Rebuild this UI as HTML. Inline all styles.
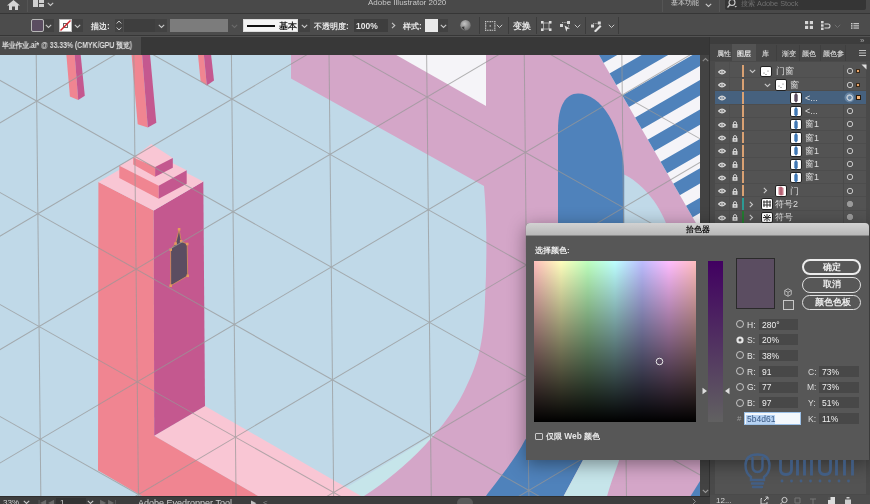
<!DOCTYPE html>
<html><head><meta charset="utf-8">
<style>
*{box-sizing:border-box;margin:0;padding:0}
html,body{width:870px;height:504px;overflow:hidden;background:#535353;font-family:"Liberation Sans",sans-serif;color:#ddd}
.a{position:absolute}
.t{position:absolute;white-space:nowrap;line-height:1;will-change:transform}
</style></head><body>
<!-- top app bar -->
<div class="a" style="left:0;top:0;width:870px;height:14px;background:#494949;border-bottom:1px solid #363636"></div>
<svg class="a" style="left:7px;top:0" width="13" height="10"><path d="M6.5 0L13 5.5H11V10H8V6.5H5V10H2V5.5H0Z" fill="#d4d4d4"/></svg>
<div class="a" style="left:27px;top:0;width:1px;height:12px;background:#555"></div>
<svg class="a" style="left:33px;top:0" width="12" height="8"><path d="M0 0H5V7H0ZM6 0H11V3H6ZM6 4H11V7H6Z" fill="#cfcfcf"/></svg>
<svg class="a" style="left:47px;top:2px" width="7" height="5"><path d="M0.8 0.8L3.5 3.5L6.2 0.8" fill="none" stroke="#c8c8c8" stroke-width="1.1"/></svg>
<div class="t" style="left:368px;top:-1.5px;font-size:8px;color:#c8c8c8">Adobe Illustrator 2020</div>
<div class="a" style="left:662px;top:0;width:1px;height:12px;background:#555"></div>
<div class="t" style="left:671px;top:-0.5px;font-size:6.8px;color:#d0d0d0">基本功能</div>
<svg class="a" style="left:705px;top:3px" width="7" height="5"><path d="M0.8 0.8L3.5 3.5L6.2 0.8" fill="none" stroke="#c8c8c8" stroke-width="1.1"/></svg>
<div class="a" style="left:719px;top:0;width:1px;height:12px;background:#555"></div>
<div class="a" style="left:725px;top:0;width:141px;height:10px;background:#353535;border-radius:0 0 2px 2px"></div>
<svg class="a" style="left:727px;top:0" width="10" height="8"><circle cx="5" cy="2.5" r="3" fill="none" stroke="#c8c8c8" stroke-width="1.1"/><path d="M3 4.5L0.5 7.5" stroke="#c8c8c8" stroke-width="1.2"/><path d="M7.5 6H10L8.7 7.5Z" fill="#c8c8c8"/></svg>
<div class="t" style="left:741px;top:-0.5px;font-size:7.3px;color:#707070">搜索 Adobe Stock</div>
<!-- control bar -->
<div class="a" style="left:0;top:14px;width:870px;height:22px;background:#4c4c4c;border-bottom:1px solid #363636"></div>
<div class="a" style="left:31px;top:19px;width:13px;height:13px;background:#5b4d61;border:1px solid #b8b8b8;border-radius:2px"></div>
<div class="a" style="left:44px;top:19px;width:10px;height:13px;background:#424242"></div><svg class="a" style="left:45px;top:24px" width="7" height="5"><path d="M0.8 0.8L3.5 3.5L6.2 0.8" fill="none" stroke="#c8c8c8" stroke-width="1.1"/></svg>
<div class="a" style="left:59px;top:19px;width:13px;height:13px;background:#fff;border:1px solid #bbb"></div>
<svg class="a" style="left:59px;top:19px" width="13" height="13"><rect x="4.5" y="4.5" width="4" height="4" fill="none" stroke="#666" stroke-width="1"/><path d="M1.5 11.5L11.5 1.5" stroke="#d0222a" stroke-width="1.4"/></svg>
<div class="a" style="left:72px;top:19px;width:11px;height:13px;background:#424242"></div><svg class="a" style="left:74px;top:24px" width="7" height="5"><path d="M0.8 0.8L3.5 3.5L6.2 0.8" fill="none" stroke="#c8c8c8" stroke-width="1.1"/></svg>
<div class="t" style="left:91px;top:21.5px;font-size:8.4px;font-weight:bold;color:#e4e4e4">描边:</div>
<div class="a" style="left:115px;top:19px;width:8px;height:13px;background:#424242"></div>
<svg class="a" style="left:116px;top:20px" width="6" height="11"><path d="M0.7 3.5L3 1L5.3 3.5M0.7 7.5L3 10L5.3 7.5" fill="none" stroke="#c8c8c8" stroke-width="1"/></svg>
<div class="a" style="left:124px;top:19px;width:31px;height:13px;background:#3e3e3e"></div>
<div class="a" style="left:155px;top:19px;width:12px;height:13px;background:#424242"></div><svg class="a" style="left:158px;top:24px" width="7" height="5"><path d="M0.8 0.8L3.5 3.5L6.2 0.8" fill="none" stroke="#c8c8c8" stroke-width="1.1"/></svg>
<div class="a" style="left:170px;top:19px;width:58px;height:13px;background:#7c7c7c"></div>
<svg class="a" style="left:231px;top:24px" width="7" height="5"><path d="M0.8 0.8L3.5 3.5L6.2 0.8" fill="none" stroke="#6a6a6a" stroke-width="1.1"/></svg>
<div class="a" style="left:243px;top:19px;width:55px;height:13px;background:#f4f4f4;border:1px solid #ddd"></div>
<div class="a" style="left:247px;top:25px;width:28px;height:2px;background:#111"></div>
<div class="t" style="left:278.5px;top:21.5px;font-size:8.5px;font-weight:bold;color:#222">基本</div>
<div class="a" style="left:298px;top:19px;width:12px;height:13px;background:#424242"></div><svg class="a" style="left:301px;top:24px" width="7" height="5"><path d="M0.8 0.8L3.5 3.5L6.2 0.8" fill="none" stroke="#c8c8c8" stroke-width="1.1"/></svg>
<div class="t" style="left:314px;top:21.5px;font-size:8.4px;font-weight:bold;color:#e4e4e4">不透明度:</div>
<div class="a" style="left:354px;top:19px;width:34px;height:13px;background:#3e3e3e"></div>
<div class="t" style="left:356px;top:21.5px;font-size:8.5px;font-weight:bold;color:#e8e8e8">100%</div>
<svg class="a" style="left:391px;top:22px" width="5" height="7"><path d="M1 0.8L3.8 3.5L1 6.2" fill="none" stroke="#c8c8c8" stroke-width="1.1"/></svg>
<div class="t" style="left:403px;top:21.5px;font-size:8.4px;font-weight:bold;color:#e4e4e4">样式:</div>
<div class="a" style="left:425px;top:19px;width:13px;height:13px;background:#e9e9e9"></div>
<div class="a" style="left:438px;top:19px;width:10px;height:13px;background:#424242"></div><svg class="a" style="left:440px;top:24px" width="7" height="5"><path d="M0.8 0.8L3.5 3.5L6.2 0.8" fill="none" stroke="#c8c8c8" stroke-width="1.1"/></svg>
<svg class="a" style="left:460px;top:20px" width="11" height="11"><defs><radialGradient id="gl" cx="0.4" cy="0.35" r="0.7"><stop offset="0" stop-color="#c4c4c4"/><stop offset="1" stop-color="#6a6a6a"/></radialGradient></defs><circle cx="5.5" cy="5.3" r="5.2" fill="url(#gl)"/><path d="M1.5 7Q3 9.5 5 10Q3.5 8 4.5 6.5Z" fill="#3a3a3a"/></svg>
<div class="a" style="left:479px;top:17px;width:1px;height:17px;background:#3c3c3c"></div>
<svg class="a" style="left:485px;top:21px" width="11" height="10"><g fill="#cfcfcf"><rect x="0" y="0" width="1.3" height="1.3"/><rect x="0" y="4.3" width="1.3" height="1.3"/><rect x="0" y="8.6" width="1.3" height="1.3"/><rect x="4.6" y="0" width="1.3" height="1.3"/><rect x="4.6" y="4.3" width="1.3" height="1.3"/><rect x="4.6" y="8.6" width="1.3" height="1.3"/><rect x="9.2" y="0" width="1.3" height="1.3"/><rect x="9.2" y="4.3" width="1.3" height="1.3"/><rect x="9.2" y="8.6" width="1.3" height="1.3"/><rect x="2" y="0.2" width="1.6" height="0.9"/><rect x="6.6" y="0.2" width="1.6" height="0.9"/><rect x="2" y="8.8" width="1.6" height="0.9"/><rect x="6.6" y="8.8" width="1.6" height="0.9"/><rect x="0.2" y="2" width="0.9" height="1.6"/><rect x="0.2" y="6.4" width="0.9" height="1.6"/><rect x="9.4" y="2" width="0.9" height="1.6"/><rect x="9.4" y="6.4" width="0.9" height="1.6"/></g></svg>
<svg class="a" style="left:496px;top:24px" width="7" height="5"><path d="M0.8 0.8L3.5 3.5L6.2 0.8" fill="none" stroke="#c8c8c8" stroke-width="1"/></svg>
<div class="a" style="left:508px;top:17px;width:1px;height:17px;background:#3c3c3c"></div>
<div class="t" style="left:513px;top:21.5px;font-size:8.5px;color:#e6e6e6;font-weight:bold">变换</div>
<div class="a" style="left:536px;top:17px;width:1px;height:17px;background:#3c3c3c"></div>
<svg class="a" style="left:541px;top:20.5px" width="10.5" height="10"><path d="M2.5 2H8V8H2.5" fill="none" stroke="#bdbdbd" stroke-width="0.8"/><g fill="#dedede"><rect x="0" y="0" width="2.6" height="2.6"/><rect x="7.9" y="0" width="2.6" height="2.6"/><rect x="0" y="7.4" width="2.6" height="2.6"/><rect x="7.9" y="7.4" width="2.6" height="2.6"/></g><path d="M2.5 2V8" stroke="#bdbdbd" stroke-width="0.8"/></svg>
<svg class="a" style="left:560px;top:20.5px" width="11" height="11"><path d="M2 1.5H8.5V6.5" fill="none" stroke="#bdbdbd" stroke-width="0.8" stroke-dasharray="1.3 1"/><rect x="0" y="3" width="3" height="3" fill="#d8d8d8"/><rect x="7" y="0" width="3" height="3" fill="#d8d8d8"/><path d="M4.5 4.5L10 7.5L7.3 8L6.3 10.8Z" fill="#e2e2e2"/></svg><svg class="a" style="left:574px;top:24px" width="7" height="5"><path d="M0.8 0.8L3.5 3.5L6.2 0.8" fill="none" stroke="#c8c8c8" stroke-width="1"/></svg>
<div class="a" style="left:585px;top:17px;width:1px;height:17px;background:#3c3c3c"></div>
<svg class="a" style="left:590.5px;top:20.5px" width="11" height="11"><path d="M2 2.5H8" fill="none" stroke="#bdbdbd" stroke-width="0.8" stroke-dasharray="1.3 1"/><rect x="0" y="3.5" width="3" height="3" fill="#d8d8d8"/><rect x="6.8" y="0.5" width="3" height="3" fill="#d8d8d8"/><path d="M3.5 9.5L9 4L10.5 5.5L5 11H3.5Z" fill="#e2e2e2"/></svg><svg class="a" style="left:608px;top:24px" width="7" height="5"><path d="M0.8 0.8L3.5 3.5L6.2 0.8" fill="none" stroke="#c8c8c8" stroke-width="1"/></svg>
<div class="a" style="left:618px;top:17px;width:1px;height:17px;background:#3c3c3c"></div>
<svg class="a" style="left:804.5px;top:21px" width="8" height="8"><g fill="#d6d6d6"><rect x="0" y="0" width="3.2" height="3.2"/><rect x="4.8" y="0" width="3.2" height="3.2"/><rect x="0" y="4.8" width="3.2" height="3.2"/><rect x="4.8" y="4.8" width="3.2" height="3.2"/></g></svg>
<svg class="a" style="left:820.5px;top:21px" width="10" height="9"><g fill="#d6d6d6"><rect x="0" y="0" width="2.6" height="2.4"/><rect x="0" y="3.3" width="2.6" height="2.4"/><rect x="0" y="6.6" width="2.6" height="2.4"/></g><path d="M3.5 3H7Q9 3 9 5Q9 7 7 7H3.5" fill="none" stroke="#d6d6d6" stroke-width="1.1"/></svg><svg class="a" style="left:834px;top:24px" width="7" height="5"><path d="M0.8 0.8L3.5 3.5L6.2 0.8" fill="none" stroke="#6f6f6f" stroke-width="1"/></svg>
<svg class="a" style="left:851px;top:22.5px" width="8" height="6"><g fill="#d0d0d0"><rect x="0" y="0" width="1.5" height="1.4"/><rect x="0" y="2.2" width="1.5" height="1.4"/><rect x="0" y="4.4" width="1.5" height="1.4"/><rect x="2.4" y="0.1" width="5.6" height="1.1"/><rect x="2.4" y="2.3" width="5.6" height="1.1"/><rect x="2.4" y="4.5" width="5.6" height="1.1"/></g></svg>
<!-- tab bar -->
<div class="a" style="left:0;top:37px;width:710px;height:18px;background:#383838"></div>
<div class="a" style="left:0;top:37px;width:141px;height:18px;background:#4b4b4b"></div>
<div class="t" style="left:2px;top:42px;font-size:8.2px;font-weight:bold;color:#dedede;transform:scaleX(0.84);transform-origin:0 0">毕业作业.ai* @ 33.33% (CMYK/GPU 预览)</div>
<!-- canvas -->
<svg class="a" style="left:0;top:55px" width="700" height="441" viewBox="0 55 700 441">
<defs><clipPath id="sc"><path d="M598.4 54H700V230Z"/></clipPath></defs>
<rect x="0" y="54" width="700" height="442" fill="#c0d9e8"/>
<path fill="#c6e5ea" d="M332.4 496L431.6 436.2L520 385L520 496Z"/>
<path fill="#f9c6d4" d="M154.2 435.8L205 406.1L361 496L258 496Z"/>
<path fill="#d4a6c8" d="M291 54H700V496H364C405 470 450 425 467 385C482 355 484 330 485 300C487 260 487 220 484 186L291 78.6Z"/>
<path fill="#f5f4f8" d="M394.5 54H486V106Z"/>
<g clip-path="url(#sc)"><rect x="590" y="54" width="120" height="180" fill="#f5f4f8"/><path fill="#4f82bb" d="M590 320.0L710 250.7L710 266.0L590 335.3ZM590 290.6L710 221.3L710 236.6L590 305.9ZM590 261.2L710 191.9L710 207.2L590 276.5ZM590 231.8L710 162.5L710 177.8L590 247.1ZM590 202.4L710 133.1L710 148.4L590 217.7ZM590 173.0L710 103.7L710 119.0L590 188.3ZM590 143.6L710 74.3L710 89.6L590 158.9ZM590 114.2L710 44.9L710 60.2L590 129.5ZM590 84.8L710 15.5L710 30.8L590 100.1ZM590 55.4L710 -13.9L710 1.4L590 70.7ZM590 26.0L710 -43.3L710 -28.0L590 41.3ZM590 -3.4L710 -72.7L710 -57.4L590 11.9ZM590 -32.8L710 -102.1L710 -86.8L590 -17.5ZM590 -62.2L710 -131.5L710 -116.2L590 -46.9Z"/></g>
<path fill="#c0d9e8" d="M624 174.4C640 182 658 200 668 228L680 260L624 260Z"/>
<path fill="#4f82bb" d="M558 260V130C558 105 566 93.5 578 93.5C600 93.5 623 125 624.2 175V260Z"/>
<path fill="#4f82bb" d="M486 496C493 486 515 460 525 440L540 420L600 420L583 460L563.7 496Z"/>
<path fill="#c6e5ea" d="M563.7 496L583 460L600 420L640 420C630 440 620 455 618.4 462.5C614 475 610 485 607.1 496Z"/>
<path fill="#4f82bb" d="M690.6 496L700 481V496Z"/>
<g fill="#f08591"><path d="M66.3 54H74.6L78.2 100L69.9 96.4Z"/><path d="M131.5 54H142L147.8 127.6L137.7 124.2Z"/><path d="M197.9 54H203.8L206.8 85.4L200.6 81.2Z"/><path d="M98.4 182L153.7 210.5L154.2 435.8L258 496L142 496L98 470.6Z"/></g>
<g fill="#c4588f"><path d="M74.6 54H80.6L84.8 95.8L78.2 100Z"/><path d="M142 54H150L156.3 122.8L147.8 127.6Z"/><path d="M203.8 54H211L214 80.4L206.8 85.4Z"/><path d="M153.7 210.5L203.3 181.6L205 406.1L154.2 435.8Z"/></g>
<path fill="#f9c6d4" d="M98.4 182L148 153.1L203.3 181.6L153.7 210.5Z"/>
<path fill="#f9c6d4" d="M119.3 165.8L147.3 150.3L186.7 170.3L158.7 185.8Z"/>
<path fill="#f08591" d="M119.3 165.8L158.7 185.8L158.7 198.7L119.3 178Z"/>
<path fill="#c4588f" d="M158.7 185.8L186.7 170.3L186.7 183.8L158.7 198.7Z"/>
<path fill="#f9c6d4" d="M133.2 157.4L151.3 144L172.8 158L155.1 167.1Z"/>
<path fill="#f08591" d="M133.2 157.4L155.1 167.1L155.1 176.7L133.2 164.5Z"/>
<path fill="#c4588f" d="M155.1 167.1L172.8 158L172.8 167.7L155.1 176.7Z"/>
<path fill="#5b4d61" stroke="#d9935a" stroke-width="0.8" d="M170.6 249.6L175.6 243.6L179.1 229.3L181.2 241.3L187.2 244L187.7 275.8L170.7 285.7Z"/>
<g fill="#e59a5e"><rect x="177.8" y="228" width="2.6" height="2.6"/><rect x="169.4" y="248.3" width="2.6" height="2.6"/><rect x="174.3" y="242.3" width="2.6" height="2.6"/><rect x="179.9" y="240" width="2.6" height="2.6"/><rect x="185.9" y="242.7" width="2.6" height="2.6"/><rect x="186.4" y="274.5" width="2.6" height="2.6"/><rect x="169.4" y="284.4" width="2.6" height="2.6"/></g>
<path fill="none" stroke="#979797" stroke-opacity="0.72" stroke-width="1" transform="translate(36.7 101.1) rotate(-0.6)" d="M-292.8 -100V500M-195.2 -100V500M-97.6 -100V500M0.0 -100V500M97.6 -100V500M195.2 -100V500M292.8 -100V500M390.4 -100V500M488.0 -100V500M585.6 -100V500M683.2 -100V500M780.8 -100V500M-150 -1213.6L750 -694.0M-150 -1100.9L750 -581.3M-150 -988.2L750 -468.6M-150 -875.5L750 -355.9M-150 -762.8L750 -243.2M-150 -650.1L750 -130.5M-150 -537.4L750 -17.8M-150 -424.7L750 94.9M-150 -312.0L750 207.6M-150 -199.3L750 320.3M-150 -86.6L750 433.0M-150 26.1L750 545.7M-150 138.8L750 658.4M-150 251.5L750 771.1M-150 364.2L750 883.8M-150 476.9L750 996.5M-150 589.6L750 1109.2M-150 702.3L750 1221.9M-150 815.0L750 1334.6M-150 927.7L750 1447.3M-150 1040.4L750 1560.0M-150 1153.1L750 1672.7M-150 -364.2L750 -883.8M-150 -251.5L750 -771.1M-150 -138.8L750 -658.4M-150 -26.1L750 -545.7M-150 86.6L750 -433.0M-150 199.3L750 -320.3M-150 312.0L750 -207.6M-150 424.7L750 -94.9M-150 537.4L750 17.8M-150 650.1L750 130.5M-150 762.8L750 243.2M-150 875.5L750 355.9M-150 988.2L750 468.6M-150 1100.9L750 581.3M-150 1213.6L750 694.0M-150 1326.3L750 806.7M-150 1439.0L750 919.4M-150 1551.7L750 1032.1M-150 1664.4L750 1144.8M-150 1777.1L750 1257.5"/>
</svg>
<!-- v scrollbar -->
<div class="a" style="left:700px;top:55px;width:9px;height:441px;background:#434343"></div>
<svg class="a" style="left:702px;top:57px" width="7" height="5"><path d="M0.8 4.2L3.5 1.5L6.2 4.2" fill="none" stroke="#8a8a8a" stroke-width="1.1"/></svg>
<svg class="a" style="left:702px;top:489px" width="7" height="5"><path d="M0.8 0.8L3.5 3.5L6.2 0.8" fill="none" stroke="#9a9a9a" stroke-width="1.1"/></svg>
<!-- panel -->
<div class="a" style="left:710px;top:37px;width:160px;height:467px;background:#4a4a4a"></div><div class="a" style="left:710px;top:37px;width:160px;height:7px;background:#3d3d3d"></div><div class="a" style="left:710px;top:44px;width:160px;height:17px;background:#464646"></div><div class="a" style="left:709px;top:37px;width:1px;height:467px;background:#333"></div>
<div class="t" style="left:860px;top:37px;font-size:8px;color:#aaa">&#187;</div>
<div class="a" style="left:732px;top:44px;width:24px;height:17px;background:#535353"></div>
<div class="t" style="left:717px;top:50px;font-size:7px;font-weight:bold;color:#c4c4c4">属性</div>
<div class="t" style="left:737px;top:50px;font-size:7px;font-weight:bold;color:#e8e8e8">图层</div>
<div class="t" style="left:761.5px;top:50px;font-size:7px;font-weight:bold;color:#c4c4c4">库</div>
<div class="t" style="left:781.7px;top:50px;font-size:7px;font-weight:bold;color:#c4c4c4">渐变</div>
<div class="t" style="left:802px;top:50px;font-size:7px;font-weight:bold;color:#c4c4c4">颜色</div>
<div class="t" style="left:822.5px;top:50px;font-size:7px;font-weight:bold;color:#c4c4c4">颜色参</div>
<div class="a" style="left:776px;top:45px;width:1px;height:16px;background:#3f3f3f"></div><div class="a" style="left:799px;top:45px;width:1px;height:16px;background:#3f3f3f"></div><div class="a" style="left:820px;top:45px;width:1px;height:16px;background:#3f3f3f"></div><div class="a" style="left:845px;top:45px;width:1px;height:16px;background:#3f3f3f"></div>
<svg class="a" style="left:859px;top:50px" width="7" height="6"><g fill="#c0c0c0"><rect y="0" width="7" height="1"/><rect y="2.5" width="7" height="1"/><rect y="5" width="7" height="1"/></g></svg>
<div class="a" style="left:714px;top:61px;width:153px;height:434px;background:#535353;border:1px solid #4a4a4a"></div><div class="a" style="left:729px;top:62px;width:1px;height:159px;background:#4e4e4e"></div>
<div class="a" style="left:715px;top:77.0px;width:151px;height:1px;background:#4d4d4d"></div>
<svg class="a" style="left:717.5px;top:68.7px" width="8" height="6"><path d="M0.7 3Q4 -0.6 7.3 3Q4 6.6 0.7 3Z" fill="none" stroke="#d8d8d8" stroke-width="1.3"/><circle cx="4" cy="3" r="0.9" fill="#d8d8d8"/></svg>
<div class="a" style="left:742px;top:65.3px;width:2px;height:11.8px;background:#d9a173"></div>
<svg class="a" style="left:749px;top:69.3px" width="7" height="5"><path d="M0.8 0.8L3.5 3.5L6.2 0.8" fill="none" stroke="#c8c8c8" stroke-width="1.1"/></svg>
<div class="a" style="left:760px;top:65.8px;width:12px;height:11.5px;background:#fff;border:1px solid #222;border-radius:2px"></div>
<div class="t" style="left:776px;top:67.3px;font-size:9px;color:#dedede">门窗</div>
<div class="a" style="left:843px;top:64.8px;width:1px;height:13.25px;background:#4a4a4a"></div>
<svg class="a" style="left:845.6px;top:67.2px" width="8" height="8"><circle cx="4" cy="4" r="2.7" fill="none" stroke="#c8c8c8" stroke-width="1"/></svg>
<div class="a" style="left:856px;top:69.2px;width:4px;height:4px;background:#e8a468;border:1px solid #3a2a1a"></div>
<div class="a" style="left:715px;top:90.3px;width:151px;height:1px;background:#4d4d4d"></div>
<svg class="a" style="left:717.5px;top:81.9px" width="8" height="6"><path d="M0.7 3Q4 -0.6 7.3 3Q4 6.6 0.7 3Z" fill="none" stroke="#d8d8d8" stroke-width="1.3"/><circle cx="4" cy="3" r="0.9" fill="#d8d8d8"/></svg>
<div class="a" style="left:742px;top:78.5px;width:2px;height:11.8px;background:#d9a173"></div>
<svg class="a" style="left:763.5px;top:82.5px" width="7" height="5"><path d="M0.8 0.8L3.5 3.5L6.2 0.8" fill="none" stroke="#c8c8c8" stroke-width="1.1"/></svg>
<div class="a" style="left:775px;top:79.0px;width:12px;height:11.5px;background:#fff;border:1px solid #222;border-radius:2px"></div>
<div class="t" style="left:790px;top:80.5px;font-size:9px;color:#dedede">窗</div>
<div class="a" style="left:843px;top:78.0px;width:1px;height:13.25px;background:#4a4a4a"></div>
<svg class="a" style="left:845.6px;top:80.5px" width="8" height="8"><circle cx="4" cy="4" r="2.7" fill="none" stroke="#c8c8c8" stroke-width="1"/></svg>
<div class="a" style="left:856px;top:82.5px;width:4px;height:4px;background:#e8a468;border:1px solid #3a2a1a"></div>
<div class="a" style="left:715px;top:91.3px;width:151px;height:13.25px;background:#46617e"></div>
<div class="a" style="left:715px;top:103.5px;width:151px;height:1px;background:#4d4d4d"></div>
<svg class="a" style="left:717.5px;top:95.2px" width="8" height="6"><path d="M0.7 3Q4 -0.6 7.3 3Q4 6.6 0.7 3Z" fill="none" stroke="#d8d8d8" stroke-width="1.3"/><circle cx="4" cy="3" r="0.9" fill="#d8d8d8"/></svg>
<div class="a" style="left:742px;top:91.8px;width:2px;height:11.8px;background:#d9a173"></div>
<div class="a" style="left:790px;top:92.3px;width:12px;height:11.5px;background:#fff;border:1px solid #222;border-radius:2px"></div>
<div class="t" style="left:805px;top:93.8px;font-size:9px;color:#dedede">&lt;...</div>

<svg class="a" style="left:845.6px;top:93.7px" width="8" height="8"><circle cx="4" cy="4" r="2.7" fill="none" stroke="#c8c8c8" stroke-width="1"/></svg>
<div class="a" style="left:855.5px;top:94.9px;width:5.5px;height:5.5px;background:#f0b27a;border:1px solid #2a1a0a"></div>
<div class="a" style="left:715px;top:116.8px;width:151px;height:1px;background:#4d4d4d"></div>
<svg class="a" style="left:717.5px;top:108.4px" width="8" height="6"><path d="M0.7 3Q4 -0.6 7.3 3Q4 6.6 0.7 3Z" fill="none" stroke="#d8d8d8" stroke-width="1.3"/><circle cx="4" cy="3" r="0.9" fill="#d8d8d8"/></svg>
<div class="a" style="left:742px;top:105.0px;width:2px;height:11.8px;background:#d9a173"></div>
<div class="a" style="left:790px;top:105.5px;width:12px;height:11.5px;background:#fff;border:1px solid #222;border-radius:2px"></div>
<div class="t" style="left:805px;top:107.0px;font-size:9px;color:#dedede">&lt;...</div>
<div class="a" style="left:843px;top:104.5px;width:1px;height:13.25px;background:#4a4a4a"></div>
<svg class="a" style="left:845.6px;top:107.0px" width="8" height="8"><circle cx="4" cy="4" r="2.7" fill="none" stroke="#c8c8c8" stroke-width="1"/></svg>
<div class="a" style="left:715px;top:130.1px;width:151px;height:1px;background:#4d4d4d"></div>
<svg class="a" style="left:717.5px;top:121.7px" width="8" height="6"><path d="M0.7 3Q4 -0.6 7.3 3Q4 6.6 0.7 3Z" fill="none" stroke="#d8d8d8" stroke-width="1.3"/><circle cx="4" cy="3" r="0.9" fill="#d8d8d8"/></svg>
<svg class="a" style="left:731.8px;top:121.2px" width="6" height="7"><path d="M1.5 3V2.2Q1.5 0.6 3 0.6Q4.5 0.6 4.5 2.2V3" fill="none" stroke="#d8d8d8" stroke-width="1"/><rect x="0.5" y="3" width="5" height="3.8" fill="#d8d8d8"/><rect x="2.5" y="4.2" width="1" height="1.5" fill="#535353"/></svg>
<div class="a" style="left:742px;top:118.3px;width:2px;height:11.8px;background:#d9a173"></div>
<div class="a" style="left:790px;top:118.8px;width:12px;height:11.5px;background:#fff;border:1px solid #222;border-radius:2px"></div>
<div class="t" style="left:805px;top:120.3px;font-size:9px;color:#dedede">窗1</div>
<div class="a" style="left:843px;top:117.8px;width:1px;height:13.25px;background:#4a4a4a"></div>
<svg class="a" style="left:845.6px;top:120.2px" width="8" height="8"><circle cx="4" cy="4" r="2.7" fill="none" stroke="#c8c8c8" stroke-width="1"/></svg>
<div class="a" style="left:715px;top:143.3px;width:151px;height:1px;background:#4d4d4d"></div>
<svg class="a" style="left:717.5px;top:135.0px" width="8" height="6"><path d="M0.7 3Q4 -0.6 7.3 3Q4 6.6 0.7 3Z" fill="none" stroke="#d8d8d8" stroke-width="1.3"/><circle cx="4" cy="3" r="0.9" fill="#d8d8d8"/></svg>
<svg class="a" style="left:731.8px;top:134.5px" width="6" height="7"><path d="M1.5 3V2.2Q1.5 0.6 3 0.6Q4.5 0.6 4.5 2.2V3" fill="none" stroke="#d8d8d8" stroke-width="1"/><rect x="0.5" y="3" width="5" height="3.8" fill="#d8d8d8"/><rect x="2.5" y="4.2" width="1" height="1.5" fill="#535353"/></svg>
<div class="a" style="left:742px;top:131.6px;width:2px;height:11.8px;background:#d9a173"></div>
<div class="a" style="left:790px;top:132.1px;width:12px;height:11.5px;background:#fff;border:1px solid #222;border-radius:2px"></div>
<div class="t" style="left:805px;top:133.6px;font-size:9px;color:#dedede">窗1</div>
<div class="a" style="left:843px;top:131.1px;width:1px;height:13.25px;background:#4a4a4a"></div>
<svg class="a" style="left:845.6px;top:133.5px" width="8" height="8"><circle cx="4" cy="4" r="2.7" fill="none" stroke="#c8c8c8" stroke-width="1"/></svg>
<div class="a" style="left:715px;top:156.6px;width:151px;height:1px;background:#4d4d4d"></div>
<svg class="a" style="left:717.5px;top:148.2px" width="8" height="6"><path d="M0.7 3Q4 -0.6 7.3 3Q4 6.6 0.7 3Z" fill="none" stroke="#d8d8d8" stroke-width="1.3"/><circle cx="4" cy="3" r="0.9" fill="#d8d8d8"/></svg>
<svg class="a" style="left:731.8px;top:147.7px" width="6" height="7"><path d="M1.5 3V2.2Q1.5 0.6 3 0.6Q4.5 0.6 4.5 2.2V3" fill="none" stroke="#d8d8d8" stroke-width="1"/><rect x="0.5" y="3" width="5" height="3.8" fill="#d8d8d8"/><rect x="2.5" y="4.2" width="1" height="1.5" fill="#535353"/></svg>
<div class="a" style="left:742px;top:144.8px;width:2px;height:11.8px;background:#d9a173"></div>
<div class="a" style="left:790px;top:145.3px;width:12px;height:11.5px;background:#fff;border:1px solid #222;border-radius:2px"></div>
<div class="t" style="left:805px;top:146.8px;font-size:9px;color:#dedede">窗1</div>
<div class="a" style="left:843px;top:144.3px;width:1px;height:13.25px;background:#4a4a4a"></div>
<svg class="a" style="left:845.6px;top:146.7px" width="8" height="8"><circle cx="4" cy="4" r="2.7" fill="none" stroke="#c8c8c8" stroke-width="1"/></svg>
<div class="a" style="left:715px;top:169.8px;width:151px;height:1px;background:#4d4d4d"></div>
<svg class="a" style="left:717.5px;top:161.5px" width="8" height="6"><path d="M0.7 3Q4 -0.6 7.3 3Q4 6.6 0.7 3Z" fill="none" stroke="#d8d8d8" stroke-width="1.3"/><circle cx="4" cy="3" r="0.9" fill="#d8d8d8"/></svg>
<svg class="a" style="left:731.8px;top:161.0px" width="6" height="7"><path d="M1.5 3V2.2Q1.5 0.6 3 0.6Q4.5 0.6 4.5 2.2V3" fill="none" stroke="#d8d8d8" stroke-width="1"/><rect x="0.5" y="3" width="5" height="3.8" fill="#d8d8d8"/><rect x="2.5" y="4.2" width="1" height="1.5" fill="#535353"/></svg>
<div class="a" style="left:742px;top:158.1px;width:2px;height:11.8px;background:#d9a173"></div>
<div class="a" style="left:790px;top:158.6px;width:12px;height:11.5px;background:#fff;border:1px solid #222;border-radius:2px"></div>
<div class="t" style="left:805px;top:160.1px;font-size:9px;color:#dedede">窗1</div>
<div class="a" style="left:843px;top:157.6px;width:1px;height:13.25px;background:#4a4a4a"></div>
<svg class="a" style="left:845.6px;top:160.0px" width="8" height="8"><circle cx="4" cy="4" r="2.7" fill="none" stroke="#c8c8c8" stroke-width="1"/></svg>
<div class="a" style="left:715px;top:183.1px;width:151px;height:1px;background:#4d4d4d"></div>
<svg class="a" style="left:717.5px;top:174.7px" width="8" height="6"><path d="M0.7 3Q4 -0.6 7.3 3Q4 6.6 0.7 3Z" fill="none" stroke="#d8d8d8" stroke-width="1.3"/><circle cx="4" cy="3" r="0.9" fill="#d8d8d8"/></svg>
<svg class="a" style="left:731.8px;top:174.2px" width="6" height="7"><path d="M1.5 3V2.2Q1.5 0.6 3 0.6Q4.5 0.6 4.5 2.2V3" fill="none" stroke="#d8d8d8" stroke-width="1"/><rect x="0.5" y="3" width="5" height="3.8" fill="#d8d8d8"/><rect x="2.5" y="4.2" width="1" height="1.5" fill="#535353"/></svg>
<div class="a" style="left:742px;top:171.3px;width:2px;height:11.8px;background:#d9a173"></div>
<div class="a" style="left:790px;top:171.8px;width:12px;height:11.5px;background:#fff;border:1px solid #222;border-radius:2px"></div>
<div class="t" style="left:805px;top:173.3px;font-size:9px;color:#dedede">窗1</div>
<div class="a" style="left:843px;top:170.8px;width:1px;height:13.25px;background:#4a4a4a"></div>
<svg class="a" style="left:845.6px;top:173.2px" width="8" height="8"><circle cx="4" cy="4" r="2.7" fill="none" stroke="#c8c8c8" stroke-width="1"/></svg>
<div class="a" style="left:715px;top:196.3px;width:151px;height:1px;background:#4d4d4d"></div>
<svg class="a" style="left:717.5px;top:188.0px" width="8" height="6"><path d="M0.7 3Q4 -0.6 7.3 3Q4 6.6 0.7 3Z" fill="none" stroke="#d8d8d8" stroke-width="1.3"/><circle cx="4" cy="3" r="0.9" fill="#d8d8d8"/></svg>
<svg class="a" style="left:731.8px;top:187.5px" width="6" height="7"><path d="M1.5 3V2.2Q1.5 0.6 3 0.6Q4.5 0.6 4.5 2.2V3" fill="none" stroke="#d8d8d8" stroke-width="1"/><rect x="0.5" y="3" width="5" height="3.8" fill="#d8d8d8"/><rect x="2.5" y="4.2" width="1" height="1.5" fill="#535353"/></svg>
<div class="a" style="left:742px;top:184.6px;width:2px;height:11.8px;background:#d9a173"></div>
<svg class="a" style="left:763px;top:187.2px" width="5" height="7"><path d="M0.8 0.8L3.5 3.5L0.8 6.2" fill="none" stroke="#c8c8c8" stroke-width="1.1"/></svg>
<div class="a" style="left:775px;top:185.1px;width:12px;height:11.5px;background:#fff;border:1px solid #222;border-radius:2px"></div>
<div class="t" style="left:790px;top:186.6px;font-size:9px;color:#dedede">门</div>
<div class="a" style="left:843px;top:184.1px;width:1px;height:13.25px;background:#4a4a4a"></div>
<svg class="a" style="left:845.6px;top:186.5px" width="8" height="8"><circle cx="4" cy="4" r="2.7" fill="none" stroke="#c8c8c8" stroke-width="1"/></svg>
<div class="a" style="left:715px;top:209.6px;width:151px;height:1px;background:#4d4d4d"></div>
<svg class="a" style="left:717.5px;top:201.2px" width="8" height="6"><path d="M0.7 3Q4 -0.6 7.3 3Q4 6.6 0.7 3Z" fill="none" stroke="#d8d8d8" stroke-width="1.3"/><circle cx="4" cy="3" r="0.9" fill="#d8d8d8"/></svg>
<svg class="a" style="left:731.8px;top:200.7px" width="6" height="7"><path d="M1.5 3V2.2Q1.5 0.6 3 0.6Q4.5 0.6 4.5 2.2V3" fill="none" stroke="#d8d8d8" stroke-width="1"/><rect x="0.5" y="3" width="5" height="3.8" fill="#d8d8d8"/><rect x="2.5" y="4.2" width="1" height="1.5" fill="#535353"/></svg>
<div class="a" style="left:742px;top:197.8px;width:2px;height:11.8px;background:#2c9a94"></div>
<svg class="a" style="left:748.5px;top:200.5px" width="5" height="7"><path d="M0.8 0.8L3.5 3.5L0.8 6.2" fill="none" stroke="#c8c8c8" stroke-width="1.1"/></svg>
<div class="a" style="left:760.5px;top:198.3px;width:12px;height:11.5px;background:#fff;border:1px solid #222;border-radius:2px"></div>
<div class="t" style="left:775px;top:199.8px;font-size:9px;color:#dedede">符号2</div>
<div class="a" style="left:843px;top:197.3px;width:1px;height:13.25px;background:#4a4a4a"></div>
<svg class="a" style="left:845.6px;top:199.7px" width="8" height="8"><circle cx="4" cy="4" r="2.7" fill="#9a9a9a" stroke="#9a9a9a" stroke-width="1"/></svg>
<div class="a" style="left:715px;top:222.8px;width:151px;height:1px;background:#4d4d4d"></div>
<svg class="a" style="left:717.5px;top:214.5px" width="8" height="6"><path d="M0.7 3Q4 -0.6 7.3 3Q4 6.6 0.7 3Z" fill="none" stroke="#d8d8d8" stroke-width="1.3"/><circle cx="4" cy="3" r="0.9" fill="#d8d8d8"/></svg>
<svg class="a" style="left:731.8px;top:214.0px" width="6" height="7"><path d="M1.5 3V2.2Q1.5 0.6 3 0.6Q4.5 0.6 4.5 2.2V3" fill="none" stroke="#d8d8d8" stroke-width="1"/><rect x="0.5" y="3" width="5" height="3.8" fill="#d8d8d8"/><rect x="2.5" y="4.2" width="1" height="1.5" fill="#535353"/></svg>
<div class="a" style="left:742px;top:211.1px;width:2px;height:11.8px;background:#237a30"></div>
<svg class="a" style="left:748.5px;top:213.8px" width="5" height="7"><path d="M0.8 0.8L3.5 3.5L0.8 6.2" fill="none" stroke="#c8c8c8" stroke-width="1.1"/></svg>
<div class="a" style="left:760.5px;top:211.6px;width:12px;height:11.5px;background:#fff;border:1px solid #222;border-radius:2px"></div>
<div class="t" style="left:775px;top:213.1px;font-size:9px;color:#dedede">符号</div>
<div class="a" style="left:843px;top:210.6px;width:1px;height:13.25px;background:#4a4a4a"></div>
<svg class="a" style="left:845.6px;top:213.0px" width="8" height="8"><circle cx="4" cy="4" r="2.7" fill="#9a9a9a" stroke="#9a9a9a" stroke-width="1"/></svg>
<svg class="a" style="left:760px;top:65.8px" width="12" height="11.5"><circle cx="4" cy="7" r="0.6" fill="#555"/><circle cx="6" cy="8.5" r="0.6" fill="#555"/><circle cx="8" cy="5" r="0.6" fill="#666"/></svg>
<svg class="a" style="left:775px;top:79.0px" width="12" height="11.5"><circle cx="4" cy="7" r="0.6" fill="#555"/><circle cx="6" cy="8.5" r="0.6" fill="#555"/><circle cx="8" cy="5" r="0.6" fill="#666"/></svg>
<svg class="a" style="left:790px;top:92.3px" width="12" height="11.5"><path d="M4.3 3L6 0.8L7.7 3V8.8L6 10.8L4.3 8.8Z" fill="#5b4d61"/></svg>
<svg class="a" style="left:790px;top:105.5px" width="12" height="11.5"><path d="M4.3 3L6 0.8L7.7 3V8.8L6 10.8L4.3 8.8Z" fill="#3f78b5"/></svg>
<svg class="a" style="left:790px;top:118.8px" width="12" height="11.5"><path d="M4.3 3L6 0.8L7.7 3V8.8L6 10.8L4.3 8.8Z" fill="#3f78b5"/></svg>
<svg class="a" style="left:790px;top:132.1px" width="12" height="11.5"><path d="M4.3 3L6 0.8L7.7 3V8.8L6 10.8L4.3 8.8Z" fill="#3f78b5"/></svg>
<svg class="a" style="left:790px;top:145.3px" width="12" height="11.5"><path d="M4.3 3L6 0.8L7.7 3V8.8L6 10.8L4.3 8.8Z" fill="#3f78b5"/></svg>
<svg class="a" style="left:790px;top:158.6px" width="12" height="11.5"><path d="M4.3 3L6 0.8L7.7 3V8.8L6 10.8L4.3 8.8Z" fill="#3f78b5"/></svg>
<svg class="a" style="left:790px;top:171.8px" width="12" height="11.5"><path d="M4.3 3L6 0.8L7.7 3V8.8L6 10.8L4.3 8.8Z" fill="#3f78b5"/></svg>
<svg class="a" style="left:775px;top:185.1px" width="12" height="11.5"><path d="M3.5 2L6 1.5L8.5 3V10L6 10.5L3.5 9.5Z" fill="#c77a88"/><path d="M6 2V10" stroke="#a04a60" stroke-width="1"/></svg>
<svg class="a" style="left:760.5px;top:198.3px" width="12" height="11.5"><path d="M2 4H10M2 7H10M3 2.5V9M6 2V9.5M9 2.5V9" stroke="#333" stroke-width="1"/></svg>
<svg class="a" style="left:760.5px;top:211.6px" width="12" height="11.5"><path d="M2 5.5H10M6 2V9.5M3 3L9 8.5M9 3L3 8.5" stroke="#333" stroke-width="1"/></svg>


<svg class="a" style="left:861px;top:64px" width="6" height="6"><path d="M0.5 0.5H5.5V5.5Z" fill="#e0e0e0"/></svg>
<svg class="a" style="left:844px;top:92.3px" width="11" height="11"><circle cx="5.5" cy="5.5" r="5" fill="#8fb0d0" fill-opacity="0.45"/><circle cx="5.5" cy="5.5" r="2.7" fill="none" stroke="#d0d8e0" stroke-width="1"/></svg>
<!-- status bar -->
<div class="a" style="left:0;top:496px;width:710px;height:8px;background:#3d3d3d;border-top:1px solid #2f2f2f"></div>
<div class="a" style="left:457px;top:498px;width:15.5px;height:10px;background:#5a5a5a;border-radius:5px"></div>
<div class="t" style="left:3px;top:499px;font-size:8px;color:#d0d0d0">33%</div>
<svg class="a" style="left:23px;top:500px" width="7" height="5"><path d="M0.8 0.8L3.5 3.5L6.2 0.8" fill="none" stroke="#c8c8c8" stroke-width="1.1"/></svg>
<div class="t" style="left:38px;top:499px;font-size:8px;color:#6a6a6a">|&#9664; &#9664;</div>
<div class="a" style="left:56px;top:498px;width:30px;height:6px;background:#333"></div>
<div class="t" style="left:60px;top:499px;font-size:8px;color:#d0d0d0">1</div>
<svg class="a" style="left:87px;top:500px" width="7" height="5"><path d="M0.8 0.8L3.5 3.5L6.2 0.8" fill="none" stroke="#c8c8c8" stroke-width="1.1"/></svg>
<div class="t" style="left:100px;top:499px;font-size:8px;color:#6a6a6a">&#9654; &#9654;|</div>
<div class="t" style="left:138px;top:499px;font-size:9px;color:#d0d0d0">Adobe Eyedropper Tool</div>
<div class="t" style="left:251px;top:499px;font-size:7px;color:#c0c0c0">&#9654;</div>
<div class="t" style="left:263px;top:499px;font-size:8px;color:#8a8a8a">&lt;</div>
<svg class="a" style="left:692px;top:498px" width="5" height="7"><path d="M0.8 0.8L3.5 3.5L0.8 6.2" fill="none" stroke="#8a8a8a" stroke-width="1"/></svg>
<div class="a" style="left:710px;top:495px;width:160px;height:9px;background:#4d4d4d"></div>
<div class="t" style="left:715.5px;top:497px;font-size:8px;color:#d8d8d8">12...</div>
<!-- dialog -->
<div class="a" style="left:525.5px;top:222.5px;width:343px;height:237px;background:#575757;border-radius:4px 4px 0 0;box-shadow:0 4px 18px rgba(0,0,0,.42)"></div>
<div class="a" style="left:525.5px;top:222.5px;width:343px;height:13.5px;background:linear-gradient(#d2d2d2,#b8b8b8);border-radius:4px 4px 0 0;border-bottom:1px solid #8a8a8a"></div>
<div class="t" style="left:685.5px;top:225.5px;font-size:8px;color:#1a1a1a;font-weight:bold">拾色器</div>
<div class="t" style="left:535px;top:246.5px;font-size:8px;color:#ececec;font-weight:bold">选择颜色:</div>
<div class="a" style="left:534.3px;top:261.3px;width:161.7px;height:161px;background:linear-gradient(to bottom,rgba(0,0,0,0),#000),linear-gradient(to right,rgb(255,189,189) 0.0%,rgb(255,222,189) 8.3%,rgb(255,255,189) 16.7%,rgb(222,255,189) 25.0%,rgb(189,255,189) 33.3%,rgb(189,255,222) 41.7%,rgb(189,255,255) 50.0%,rgb(189,222,255) 58.3%,rgb(189,189,255) 66.7%,rgb(222,189,255) 75.0%,rgb(255,189,255) 83.3%,rgb(255,189,222) 91.7%,rgb(255,189,189) 100.0%)"></div>
<svg class="a" style="left:655px;top:357px" width="9" height="9"><circle cx="4.5" cy="4.5" r="3.3" fill="none" stroke="#e8e8e8" stroke-width="1"/></svg>
<div class="a" style="left:707.8px;top:261.2px;width:15.7px;height:161px;background:linear-gradient(to bottom,#410061,#616161)"></div>
<svg class="a" style="left:701px;top:387px" width="30" height="8"><path d="M1.5 0.8L6 4L1.5 7.2Z" fill="#dedede"/><path d="M28.5 0.8L24 4L28.5 7.2Z" fill="#dedede"/></svg>
<div class="a" style="left:735.5px;top:258.2px;width:39.2px;height:50.6px;background:#5b4d61;border:1px solid #2a2a2a"></div>
<svg class="a" style="left:784px;top:288px" width="8" height="9"><path d="M4 0.7L7.3 2.5V6.5L4 8.3L0.7 6.5V2.5Z M0.7 2.5L4 4.3L7.3 2.5M4 4.3V8.3" fill="none" stroke="#bdbdbd" stroke-width="0.9"/></svg>
<div class="a" style="left:783px;top:300px;width:10.5px;height:10px;background:#5e5e5e;border:1px solid #c8c8c8"></div>
<div class="a" style="left:802px;top:258.7px;width:59px;height:16.7px;border:2.2px solid #ececec;border-radius:8px"></div>
<div class="t" style="left:823.0px;top:262.5px;font-size:8.5px;color:#ececec;font-weight:bold">确定</div>
<div class="a" style="left:802px;top:277px;width:59px;height:15.5px;border:1.5px solid #e0e0e0;border-radius:8px"></div>
<div class="t" style="left:823.0px;top:280.2px;font-size:8.5px;color:#ececec;font-weight:bold">取消</div>
<div class="a" style="left:802px;top:294.6px;width:59px;height:15.2px;border:1.5px solid #e0e0e0;border-radius:8px"></div>
<div class="t" style="left:814.5px;top:297.7px;font-size:8.5px;color:#ececec;font-weight:bold">颜色色板</div>
<svg class="a" style="left:735px;top:319.3px" width="10" height="10"><circle cx="5" cy="5" r="3.5" fill="none" stroke="#d0d0d0" stroke-width="0.9"/></svg>
<div class="t" style="left:746.5px;top:320.8px;font-size:8.5px;color:#e6e6e6">H:</div>
<div class="a" style="left:759px;top:319px;width:38.6px;height:11px;background:#484848"></div>
<div class="t" style="left:761.5px;top:320.8px;font-size:8.5px;color:#f0f0f0">280°</div>
<svg class="a" style="left:735px;top:334.6px" width="10" height="10"><circle cx="5" cy="5" r="3.6" fill="#e6e6e6"/><circle cx="5" cy="5" r="1.5" fill="#555"/></svg>
<div class="t" style="left:746.5px;top:336.1px;font-size:8.5px;color:#e6e6e6">S:</div>
<div class="a" style="left:759px;top:334.3px;width:38.6px;height:11px;background:#484848"></div>
<div class="t" style="left:761.5px;top:336.1px;font-size:8.5px;color:#f0f0f0">20%</div>
<svg class="a" style="left:735px;top:350.0px" width="10" height="10"><circle cx="5" cy="5" r="3.5" fill="none" stroke="#d0d0d0" stroke-width="0.9"/></svg>
<div class="t" style="left:746.5px;top:351.5px;font-size:8.5px;color:#e6e6e6">B:</div>
<div class="a" style="left:759px;top:349.7px;width:38.6px;height:11px;background:#484848"></div>
<div class="t" style="left:761.5px;top:351.5px;font-size:8.5px;color:#f0f0f0">38%</div>
<svg class="a" style="left:735px;top:366.3px" width="10" height="10"><circle cx="5" cy="5" r="3.5" fill="none" stroke="#d0d0d0" stroke-width="0.9"/></svg>
<div class="t" style="left:746.5px;top:367.8px;font-size:8.5px;color:#e6e6e6">R:</div>
<div class="a" style="left:759px;top:366px;width:38.6px;height:11px;background:#484848"></div>
<div class="t" style="left:761.5px;top:367.8px;font-size:8.5px;color:#f0f0f0">91</div>
<svg class="a" style="left:735px;top:381.9px" width="10" height="10"><circle cx="5" cy="5" r="3.5" fill="none" stroke="#d0d0d0" stroke-width="0.9"/></svg>
<div class="t" style="left:746.5px;top:383.4px;font-size:8.5px;color:#e6e6e6">G:</div>
<div class="a" style="left:759px;top:381.6px;width:38.6px;height:11px;background:#484848"></div>
<div class="t" style="left:761.5px;top:383.4px;font-size:8.5px;color:#f0f0f0">77</div>
<svg class="a" style="left:735px;top:397.5px" width="10" height="10"><circle cx="5" cy="5" r="3.5" fill="none" stroke="#d0d0d0" stroke-width="0.9"/></svg>
<div class="t" style="left:746.5px;top:399.0px;font-size:8.5px;color:#e6e6e6">B:</div>
<div class="a" style="left:759px;top:397.2px;width:38.6px;height:11px;background:#484848"></div>
<div class="t" style="left:761.5px;top:399.0px;font-size:8.5px;color:#f0f0f0">97</div>
<div class="t" style="left:808px;top:367.8px;font-size:8.5px;color:#dcdcdc">C:</div>
<div class="a" style="left:819.3px;top:366px;width:39.3px;height:11px;background:#484848"></div>
<div class="t" style="left:821.5px;top:367.8px;font-size:8.5px;color:#f0f0f0">73%</div>
<div class="t" style="left:807px;top:383.4px;font-size:8.5px;color:#dcdcdc">M:</div>
<div class="a" style="left:819.3px;top:381.6px;width:39.3px;height:11px;background:#484848"></div>
<div class="t" style="left:821.5px;top:383.4px;font-size:8.5px;color:#f0f0f0">73%</div>
<div class="t" style="left:808px;top:399.0px;font-size:8.5px;color:#dcdcdc">Y:</div>
<div class="a" style="left:819.3px;top:397.2px;width:39.3px;height:11px;background:#484848"></div>
<div class="t" style="left:821.5px;top:399.0px;font-size:8.5px;color:#f0f0f0">51%</div>
<div class="t" style="left:808px;top:414.8px;font-size:8.5px;color:#dcdcdc">K:</div>
<div class="a" style="left:819.3px;top:413px;width:39.3px;height:11px;background:#484848"></div>
<div class="t" style="left:821.5px;top:414.8px;font-size:8.5px;color:#f0f0f0">11%</div>
<div class="t" style="left:737px;top:415px;font-size:8px;color:#9a9a9a">#</div>
<div class="a" style="left:743.8px;top:412.4px;width:57.2px;height:13px;background:#f4f8fc;border:1px solid #9cc0e6"></div>
<div class="a" style="left:746px;top:414.5px;width:29px;height:9px;background:#b7d2f2"></div>
<div class="t" style="left:746.5px;top:415px;font-size:8.5px;color:#3a5a85">5b4d61</div>
<div class="a" style="left:535.3px;top:432.8px;width:7.4px;height:7.4px;border:1px solid #c8c8c8;border-radius:1px"></div>
<div class="t" style="left:545.5px;top:432px;font-size:8.4px;color:#e6e6e6;font-weight:bold">仅限 Web 颜色</div>
<svg class="a" style="left:760px;top:496px" width="95" height="8"><g fill="none" stroke="#cfcfcf" stroke-width="1">
<path d="M2 2.5H1V8H7V6M4 5L8 1M5.5 1H8V3.5"/>
<circle cx="24.5" cy="4" r="2.6"/><path d="M22.6 6L20 8.5"/>
<path d="M35 2H40V7H35Z" stroke="#777"/>
<path d="M50 3H56M53 3V8" stroke="#777"/>
</g><path d="M68 1H75V8H68Z" fill="#dcdcdc"/><path d="M68 1H70.5V4H68Z" fill="#535353"/>
<path d="M84 2.5H92M86.5 2.5V1H89.5V2.5M85 3.5H91V8H85Z" fill="#cfcfcf"/></svg>
<svg class="a" style="left:740px;top:450px" width="125" height="45"><g fill="none" stroke="#3e6291" stroke-opacity="0.8" stroke-width="2.4" stroke-linecap="round">
<path d="M11 27Q5.5 23 5.5 15.5Q5.5 4.5 17.5 4.5Q29.5 4.5 29.5 15.5Q29.5 23 24 27V30H11Z"/>
<path d="M12.5 8V16Q12.5 22 17.5 22Q22.5 22 22.5 16V8"/>
<path d="M12 33.5H23M13 37H22"/>
</g><g fill="none" stroke="#3e6291" stroke-opacity="0.8" stroke-width="2.8">
<path d="M40.5 10V19.5Q40.5 24.5 46 24.5Q51.5 24.5 51.5 19.5V10"/>
<path d="M57.5 10V25.5M64.5 10V25.5M71.5 10V25.5"/>
<path d="M79.5 10V19.5Q79.5 24.5 85 24.5Q90.5 24.5 90.5 19.5V10"/>
<path d="M96.5 10V25.5M104.5 10V25.5M112.5 10V25.5"/>
</g><g fill="#3e6291" fill-opacity="0.75"><circle cx="42" cy="31" r="1.4"/><circle cx="51.5" cy="31" r="1.4"/><circle cx="61" cy="31" r="1.4"/><circle cx="70.5" cy="31" r="1.4"/><circle cx="80" cy="31" r="1.4"/><circle cx="89.5" cy="31" r="1.4"/><circle cx="99" cy="31" r="1.4"/><circle cx="108.5" cy="31" r="1.4"/></g></svg>
</body></html>
